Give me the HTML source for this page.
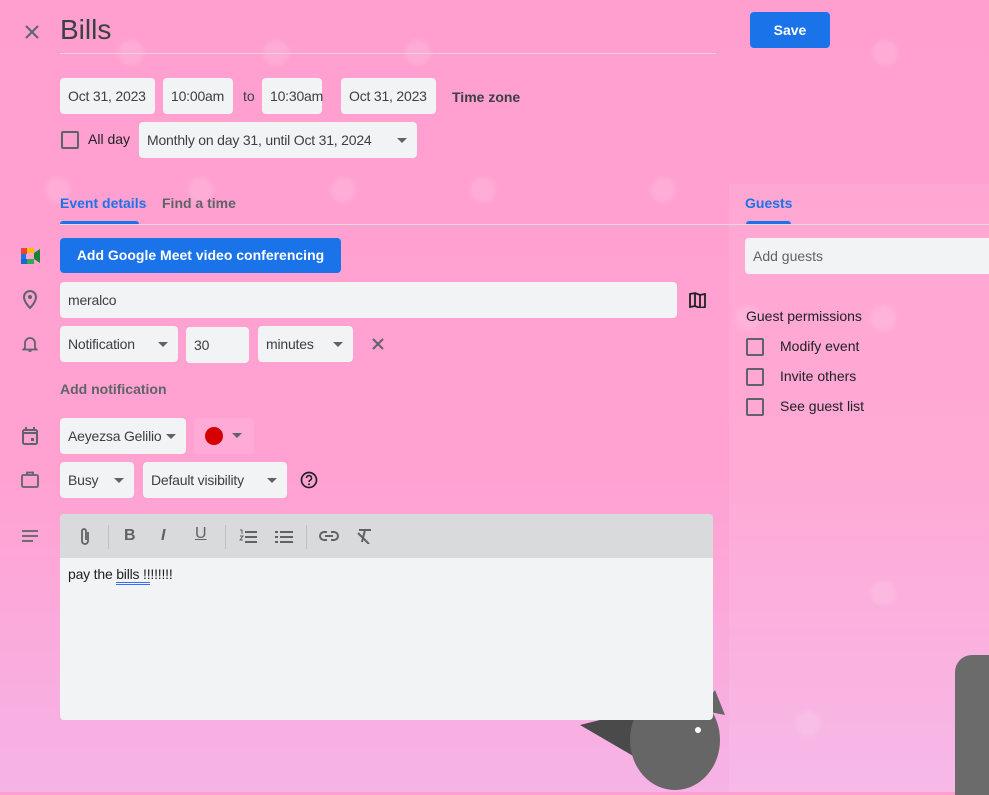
<!DOCTYPE html><html><head><style>
*{box-sizing:border-box;margin:0;padding:0}
body{width:989px;height:792px;overflow:hidden;font-family:"Liberation Sans",Arial,sans-serif;background:linear-gradient(#ff9fcf,#ffa2d2 60%,#f6b3e6);position:relative;color:#3c4043}
.a{position:absolute}
.chip{position:absolute;background:#f1f3f4;border-radius:4px;height:36px;line-height:36px;font-size:14px;padding-left:8px;color:#3c4043;letter-spacing:-0.2px}
.dd::after{content:"";position:absolute;right:10px;top:16px;border:5px solid transparent;border-top-color:#5f6368;border-bottom:0}
.cb{position:absolute;width:18px;height:18px;border:2px solid #5f6368;border-radius:2px}
.t{position:absolute;font-size:14px;white-space:nowrap}
.dot{position:absolute;width:26px;height:26px;border-radius:50%;background:rgba(255,255,255,.13);filter:blur(2px)}
</style></head><body>
<div class="dot" style="left:118px;top:40px"></div><div class="dot" style="left:263px;top:40px"></div><div class="dot" style="left:405px;top:40px"></div><div class="dot" style="left:872px;top:40px"></div><div class="dot" style="left:45px;top:177px"></div><div class="dot" style="left:188px;top:177px"></div><div class="dot" style="left:330px;top:177px"></div><div class="dot" style="left:470px;top:177px"></div><div class="dot" style="left:650px;top:177px"></div><div class="dot" style="left:735px;top:305px"></div><div class="dot" style="left:870px;top:305px"></div><div class="dot" style="left:870px;top:580px"></div><div class="dot" style="left:795px;top:710px"></div>
<div class="a" style="left:729px;top:184px;width:260px;height:608px;background:rgba(255,255,255,.08)"></div>
<svg class="a" style="left:580px;top:650px" width="150" height="142" viewBox="0 0 150 142"><path d="M0 75 L60 60 L90 80 L60 110 Z" fill="#4a4a4a"/><ellipse cx="95" cy="90" rx="45" ry="50" fill="#666"/><path d="M120 60 L135 40 L145 65Z" fill="#666"/><circle cx="118" cy="80" r="3" fill="#fff"/></svg>
<div class="a" style="left:955px;top:655px;width:34px;height:140px;background:#6b6b6b;border-radius:17px 0 0 0"></div>
<svg class="a" style="left:24px;top:24px" width="16" height="16" viewBox="0 0 16 16"><path d="M2 2L14 14M14 2L2 14" stroke="#5f6368" stroke-width="2"/></svg>
<div class="a" style="left:60px;top:14px;font-size:28px;color:#3c4043">Bills</div>
<div class="a" style="left:60px;top:53px;width:656px;height:1px;background:#e8d0e0"></div>
<div class="a" style="left:750px;top:12px;width:80px;height:36px;background:#1a73e8;border-radius:4px;color:#fff;font-weight:bold;font-size:14px;text-align:center;line-height:36px">Save</div>
<div class="chip" style="left:60px;top:78px;width:95px">Oct 31, 2023</div>
<div class="chip" style="left:163px;top:78px;width:70px">10:00am</div>
<div class="t" style="left:243px;top:88px">to</div>
<div class="chip" style="left:262px;top:78px;width:60px">10:30am</div>
<div class="chip" style="left:341px;top:78px;width:95px">Oct 31, 2023</div>
<div class="t" style="left:452px;top:89px;font-weight:bold;color:#3c4043">Time zone</div>
<div class="cb" style="left:61px;top:131px"></div>
<div class="t" style="left:88px;top:131px;color:#202124">All day</div>
<div class="chip dd" style="left:139px;top:122px;width:278px">Monthly on day 31, until Oct 31, 2024</div>
<div class="t" style="left:60px;top:195px;color:#1a73e8;font-weight:bold">Event details</div>
<div class="t" style="left:162px;top:195px;color:#5f6368;font-weight:bold">Find a time</div>
<div class="a" style="left:60px;top:221px;width:79px;height:3px;background:#1a73e8;border-radius:3px 3px 0 0"></div>
<div class="a" style="left:60px;top:224px;width:669px;height:1px;background:#dadce0"></div>
<div class="t" style="left:745px;top:195px;color:#1a73e8;font-weight:bold">Guests</div>
<div class="a" style="left:746px;top:221px;width:45px;height:3px;background:#1a73e8;border-radius:3px 3px 0 0"></div>
<div class="a" style="left:729px;top:224px;width:260px;height:1px;background:#dadce0"></div>
<svg class="a" style="left:21px;top:248px" width="19" height="16" viewBox="0 0 19 16"><rect x="0" y="0" width="6" height="6" fill="#ea4335"/><rect x="6" y="0" width="7" height="5" fill="#fbbc04"/><rect x="0" y="6" width="5" height="6" fill="#1a73e8"/><rect x="0" y="11" width="6" height="5" fill="#1967d2"/><rect x="6" y="11" width="7" height="5" fill="#34a853"/><path d="M13 5l6-4v14l-6-4z" fill="#188038"/></svg>
<div class="a" style="left:60px;top:238px;width:281px;height:35px;background:#1a73e8;border-radius:4px;color:#fff;font-weight:bold;font-size:14px;text-align:center;line-height:35px">Add Google Meet video conferencing</div>
<svg class="a" style="left:22px;top:289px" width="16" height="22" viewBox="0 0 16 22"><path d="M8 2a6 6 0 0 1 6 6c0 5-6 11-6 11S2 13 2 8a6 6 0 0 1 6-6z" fill="none" stroke="#5f6368" stroke-width="2"/><circle cx="8" cy="8" r="2" fill="#5f6368"/></svg>
<div class="chip" style="left:60px;top:282px;width:617px">meralco</div>
<svg class="a" style="left:689px;top:292px" width="17" height="16" viewBox="0 0 17 16"><path d="M1 2l5-1 5 2 5-1v13l-5 1-5-2-5 1z M6 1v13M11 3v13" fill="none" stroke="#202124" stroke-width="1.8"/></svg>
<svg class="a" style="left:22px;top:335px" width="16" height="18" viewBox="0 0 16 18"><path d="M3 13V8a5 5 0 0 1 10 0v5l1.5 1.5h-13zM6.5 16h3" fill="none" stroke="#5f6368" stroke-width="1.8"/></svg>
<div class="chip dd" style="left:60px;top:326px;width:118px">Notification</div>
<div class="chip" style="left:186px;top:327px;width:63px">30</div>
<div class="chip dd" style="left:258px;top:326px;width:95px">minutes</div>
<svg class="a" style="left:372px;top:338px" width="12" height="12" viewBox="0 0 12 12"><path d="M1 1L11 11M11 1L1 11" stroke="#5f6368" stroke-width="2"/></svg>
<div class="t" style="left:60px;top:381px;color:#5f6368;font-weight:bold">Add notification</div>
<svg class="a" style="left:22px;top:427px" width="16" height="18" viewBox="0 0 16 18"><rect x="1" y="3" width="14" height="14" rx="1.5" fill="none" stroke="#5f6368" stroke-width="2"/><path d="M1 6h14M4 0v4M12 0v4" stroke="#5f6368" stroke-width="2"/><rect x="9" y="11" width="3" height="3" fill="#5f6368"/></svg>
<div class="chip dd" style="left:60px;top:418px;width:126px;padding-right:20px">Aeyezsa Gelilio</div>
<div class="a" style="left:194px;top:418px;width:60px;height:36px;background:rgba(255,255,255,.1);border-radius:4px"></div>
<div class="a" style="left:205px;top:427px;width:18px;height:18px;border-radius:50%;background:#d50000"></div>
<div class="a" style="left:232px;top:433px;border:5px solid transparent;border-top-color:#5f6368;border-bottom:0"></div>
<svg class="a" style="left:21px;top:471px" width="18" height="17" viewBox="0 0 18 17"><rect x="1" y="4" width="16" height="12" rx="1.5" fill="none" stroke="#5f6368" stroke-width="1.8"/><path d="M6 4V1.5h6V4" fill="none" stroke="#5f6368" stroke-width="1.8"/></svg>
<div class="chip dd" style="left:60px;top:462px;width:74px">Busy</div>
<div class="chip dd" style="left:143px;top:462px;width:144px">Default visibility</div>
<svg class="a" style="left:300px;top:471px" width="18" height="18" viewBox="0 0 18 18"><circle cx="9" cy="9" r="7.5" fill="none" stroke="#202124" stroke-width="1.7"/><path d="M6.5 7a2.5 2.5 0 1 1 3.5 2.3c-.7.4-1 .8-1 1.7" fill="none" stroke="#202124" stroke-width="1.6"/><circle cx="9" cy="13.3" r="1" fill="#202124"/></svg>
<svg class="a" style="left:22px;top:530px" width="16" height="12" viewBox="0 0 16 12"><path d="M0 1h16M0 6h16M0 11h11" stroke="#5f6368" stroke-width="1.8"/></svg>
<div class="a" style="left:60px;top:514px;width:653px;height:206px;background:#f1f3f4;border-radius:4px;overflow:hidden">
<div style="height:44px;background:#d9dadc;position:relative">
<svg class="a" style="left:19px;top:13px" width="12" height="20" viewBox="0 0 12 20"><path d="M9 5v9a3 3 0 0 1-6 0V4a2 2 0 0 1 4 0v9" fill="none" stroke="#5f6368" stroke-width="1.8"/></svg>
<div class="a" style="left:48px;top:11px;width:1px;height:24px;background:#bdc1c6"></div>
<div class="a" style="left:64px;top:13px;font-weight:bold;font-size:16px;color:#5f6368">B</div>
<div class="a" style="left:101px;top:13px;font-weight:bold;font-style:italic;font-size:16px;color:#5f6368">I</div>
<div class="a" style="left:135px;top:11px;font-size:16px;color:#5f6368;text-decoration:underline">U</div>
<div class="a" style="left:165px;top:11px;width:1px;height:24px;background:#bdc1c6"></div>
<svg class="a" style="left:179px;top:15px" width="18" height="16" viewBox="0 0 18 16"><path d="M6 3h12M6 8h12M6 13h12" stroke="#5f6368" stroke-width="2"/><path d="M1 1h2v4M1 7h3l-3 4h3" stroke="#5f6368" stroke-width="1" fill="none"/></svg>
<svg class="a" style="left:215px;top:15px" width="18" height="16" viewBox="0 0 18 16"><path d="M5 3h13M5 8h13M5 13h13M0 3h3M0 8h3M0 13h3" stroke="#5f6368" stroke-width="2"/></svg>
<div class="a" style="left:246px;top:11px;width:1px;height:24px;background:#bdc1c6"></div>
<svg class="a" style="left:259px;top:16px" width="20" height="12" viewBox="0 0 20 12"><path d="M8 2H5a4 4 0 0 0 0 8h3M12 2h3a4 4 0 0 1 0 8h-3M6 6h8" fill="none" stroke="#5f6368" stroke-width="2"/></svg>
<svg class="a" style="left:296px;top:14px" width="16" height="16" viewBox="0 0 16 16"><path d="M3 2h12M9 2L6 14M2 5l11 11" fill="none" stroke="#5f6368" stroke-width="2"/></svg>
</div>
<div class="a" style="left:8px;top:52px;font-size:14px;color:#202124;letter-spacing:-0.2px">pay the <span style="border-bottom:3px double #3b6cff">bills !!</span>!!!!!!</div>
</div>
<div class="a" style="left:745px;top:238px;width:244px;height:36px;background:#f1f3f4;border-radius:4px 0 0 4px;font-size:14px;color:#5f6368;line-height:36px;padding-left:8px">Add guests</div>
<div class="t" style="left:746px;top:308px;color:#202124">Guest permissions</div>
<div class="cb" style="left:746px;top:338px"></div><div class="t" style="left:780px;top:338px;color:#202124">Modify event</div>
<div class="cb" style="left:746px;top:368px"></div><div class="t" style="left:780px;top:368px;color:#202124">Invite others</div>
<div class="cb" style="left:746px;top:398px"></div><div class="t" style="left:780px;top:398px;color:#202124">See guest list</div>
</body></html>
